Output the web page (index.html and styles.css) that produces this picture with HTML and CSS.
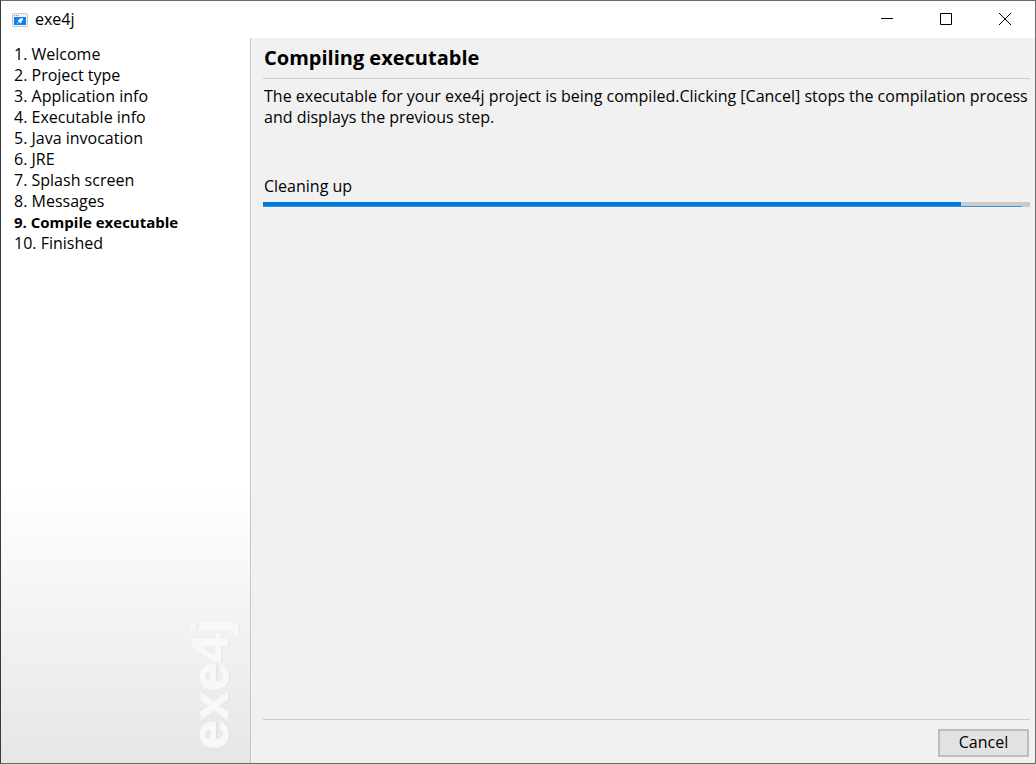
FILE: index.html
```html
<!DOCTYPE html>
<html lang="en">
<head>
<meta charset="utf-8">
<title>exe4j</title>
<link rel="stylesheet" href="styles.css">
</head>
<body>
<div class="window">
  <header class="titlebar">
    <svg class="app-icon" width="16" height="14" viewBox="0 0 16 14" aria-hidden="true">
      <rect x="0.5" y="0.5" width="15" height="13" rx="1" fill="#f4f4f4" stroke="#c6c6c6"/>
      <path d="M2 2h1v1H2zM4 2h1v1H4zM6 2h1v1H6z" fill="#f0604d"/>
      <path d="M2 4h12v8H2z" fill="#0a84f5"/>
      <path d="M11 5L10.500 7.500L9.500 8.500L9 10.500L7.500 9.500L6.500 8.500L5.500 8L7 6.500L8.500 5.500z" fill="#fff"/>
      <path d="M6.500 9.500l-1.500 1.500" stroke="#b9dcff"/>
    </svg>
    <span class="app-name">exe4j</span>
    <div class="window-controls">
      <button class="control" type="button" aria-label="Minimize"><svg width="12" height="12" viewBox="0 0 12 12"><path d="M0 5.500h12" stroke="#000"/></svg></button>
      <button class="control" type="button" aria-label="Maximize"><svg width="12" height="12" viewBox="0 0 12 12"><path d="M0.500 0.500h11v11h-11z" fill="none" stroke="#000"/></svg></button>
      <button class="control" type="button" aria-label="Close"><svg width="12" height="12" viewBox="0 0 12 12"><path d="M0 0L12 12M12 0L0 12" stroke="#000"/></svg></button>
    </div>
  </header>
  <div class="body">
    <nav class="sidebar" aria-label="Wizard steps">
      <ol class="steps">
        <li>1. Welcome</li>
        <li>2. Project type</li>
        <li>3. Application info</li>
        <li>4. Executable info</li>
        <li>5. Java invocation</li>
        <li>6. JRE</li>
        <li>7. Splash screen</li>
        <li>8. Messages</li>
        <li class="current" aria-current="step">9. Compile executable</li>
        <li>10. Finished</li>
      </ol>
      <div class="wordmark">exe4j</div>
    </nav>
    <main class="content">
      <h1 class="title">Compiling executable</h1>
      <p class="description">The executable for your exe4j project is being compiled.Clicking [Cancel] stops the compilation process and displays the previous step.</p>
      <label class="status" for="progress">Cleaning up</label>
      <progress class="progress" id="progress" value="91" max="100"></progress>
      <footer class="actions"><button class="cancel" type="button">Cancel</button></footer>
    </main>
  </div>
</div>
</body>
</html>
```
FILE: styles.css
```css
* { box-sizing: border-box; }

body {
  margin: 0;
  font-family: "Open Sans", "Noto Sans", sans-serif;
  font-size: 16px;
  line-height: 21px;
  color: #000;
}

.window {
  display: flex;
  flex-direction: column;
  min-height: 100vh;
  border: 1px solid #6b6969;
  border-left-color: #3a3a3c;
  background: #fff;
}

.titlebar {
  display: flex;
  align-items: center;
  height: 37px;
  padding-left: 11px;
}

.app-icon { margin-right: 7px; }

.window-controls {
  display: flex;
  align-self: stretch;
  margin-left: auto;
  padding: 0 1px 2px 0;
}

.control {
  display: flex;
  align-items: center;
  justify-content: center;
  width: 59px;
  padding: 0;
  border: 0;
  background: none;
}

.body {
  display: flex;
  flex: 1;
}

.sidebar {
  display: flex;
  flex-direction: column;
  justify-content: space-between;
  flex: 0 0 250px;
  padding: 6px 12px 14px 13px;
  border-right: 1px solid #c8c8c8;
  background: linear-gradient(to top, #e6e6e6, #fff 280px);
}

.steps {
  margin: 0;
  padding: 0;
  list-style: none;
}

.current {
  font-size: 15px;
  font-weight: 700;
}

.wordmark {
  align-self: flex-end;
  writing-mode: vertical-rl;
  transform: rotate(180deg);
  font-family: "Liberation Sans", Arial, sans-serif;
  font-size: 52px;
  font-weight: 700;
  line-height: 56px;
  color: #f8f8f8;
  -webkit-text-stroke: 1px #f8f8f8;
  text-shadow: 0 1px 1px #d4d4d4;
}

.content {
  display: flex;
  flex-direction: column;
  flex: 1;
  min-width: 0;
  padding: 6px 5px 6px 12px;
  background: #f1f1f1;
}

.title {
  margin: 0;
  padding: 0 1px 6px;
  border-bottom: 1px solid #cbcbcb;
  font-size: 20px;
  line-height: 28px;
}

.description {
  margin: 7px 0 0;
  padding: 0 1px;
}

.status {
  margin-top: 48px;
  padding: 0 1px;
}

.progress {
  display: block;
  width: 100%;
  height: 5px;
  margin-top: 5px;
  border: 0;
  appearance: none;
  background: #cbcbcb;
}

.progress::-webkit-progress-bar { background: linear-gradient(to right, #3a96e4 99%, #cbcbcb 99%) bottom / 100% 1px no-repeat #cbcbcb; }
.progress::-webkit-progress-value { background: linear-gradient(#0078d7 4px, #3a96e4 4px); }

.actions {
  display: flex;
  justify-content: flex-end;
  margin-top: auto;
  padding: 9px 1px 0;
  border-top: 1px solid #cbcbcb;
}

.cancel {
  width: 91px;
  height: 28px;
  padding: 0 0 2px;
  border: 2px solid #bdbdbd;
  background: #e2e2e2;
  color: #000;
  font: inherit;
}
```
